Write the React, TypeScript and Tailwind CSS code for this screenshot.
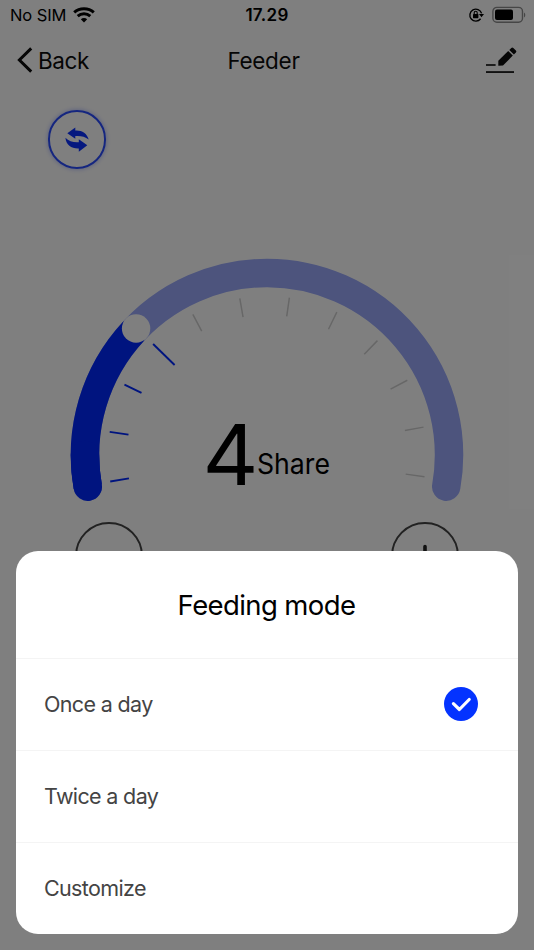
import React, { useState } from 'react';

const MODES = ['Once a day', 'Twice a day', 'Customize'];

const CENTER = { x: 267, y: 207 };
const RADIUS = 182;
const SHARE = 4;

// Angles are measured clockwise from the left side of the dial
const point = (deg: number, r: number) => {
  const rad = (deg * Math.PI) / 180;
  return { x: CENTER.x - r * Math.cos(rad), y: CENTER.y - r * Math.sin(rad) };
};

const arc = (from: number, to: number) => {
  const a = point(from, RADIUS);
  const b = point(to, RADIUS);
  return `M${a.x} ${a.y}A${RADIUS} ${RADIUS} 0 ${to - from > 180 ? 1 : 0} 1 ${b.x} ${b.y}`;
};

const StatusBar: React.FC = () => (
  <div className="flex h-[30px] items-center justify-between pl-[10px] pr-[8px] text-black">
    <div className="flex w-[120px] items-center gap-[7px]">
      <span className="text-[16.5px] leading-[30px] tracking-[-0.1px]">No SIM</span>
      <svg width="22" height="16" viewBox="0 0 22 16" fill="none" stroke="currentColor" strokeWidth="3">
        <path d="M1.2 5.4C6.6 .5 15.4 .5 20.8 5.4" />
        <path d="M4.7 9.2C8.3 6 13.7 6 17.3 9.2" />
        <path d="M11 15.4L7.8 12.2C9.6 10.7 12.4 10.7 14.2 12.2Z" fill="currentColor" stroke="none" />
      </svg>
    </div>
    <span className="-ml-[2px] pt-[2px] text-[17px] font-semibold tracking-[0.3px]">17.29</span>
    <div className="flex w-[120px] items-center justify-end gap-[8px]">
      <svg width="16" height="16" viewBox="0 0 16 16" fill="none" stroke="currentColor">
        <path d="M12.6 11.8A6 6 0 1 1 13.6 6.4" strokeWidth="1.4" />
        <path d="M11 7h5l-2.5 3.2z" fill="currentColor" stroke="none" />
        <rect x="5" y="7" width="5.4" height="4.2" rx=".6" fill="currentColor" stroke="none" />
        <path d="M6.2 7V5.8a1.5 1.5 0 0 1 3 0V7" strokeWidth="1.1" />
      </svg>
      <svg className="-mt-[1px]" width="34" height="18" viewBox="0 0 34 18">
        <rect x=".9" y="1.4" width="29.6" height="14.8" rx="4" fill="none" stroke="#8c8c8c" strokeWidth="1.4" />
        <rect x="3" y="3.6" width="18" height="10.4" rx="2" fill="currentColor" />
        <path d="M32 6.4c1.7.7 1.7 4.3 0 5z" fill="#8c8c8c" />
      </svg>
    </div>
  </div>
);

const NavBar: React.FC = () => (
  <div className="flex h-[60px] items-center justify-between pl-[17px] pr-[16px] text-[#0c0c0c]">
    <button className="flex w-[120px] items-center gap-[5px]">
      <svg width="16" height="26" viewBox="0 0 16 26" fill="none" stroke="currentColor" strokeWidth="3">
        <path d="M14.2 1.4L2.4 13l11.8 11.6" />
      </svg>
      <span className="pt-px text-[22.5px] tracking-[-0.4px]">Back</span>
    </button>
    <h1 className="-ml-[8px] pt-px text-[22.5px] tracking-[-0.3px]">Feeder</h1>
    <div className="flex w-[120px] justify-end">
      <svg width="34" height="30" viewBox="0 0 34 30" fill="currentColor">
        <path d="M14.3 20.8v-5L24.2 6l4.6 4.6-9.8 9.8z" />
        <path d="M25.3 4.9l2-2q1-1 2 0l2.6 2.6q1 1 0 2l-2 2z" />
        <rect x="2" y="19.2" width="9.6" height="1.6" />
        <rect x="2" y="26.2" width="28" height="1.7" />
      </svg>
    </div>
  </div>
);

const Gauge: React.FC = () => {
  const knob = point(44, RADIUS);
  return (
    <svg width="534" height="264" viewBox="0 0 534 264" fill="none">
      <path d={arc(-10, 190)} stroke="#9aa9fa" strokeWidth="28.5" strokeLinecap="round" />
      <path d={arc(-10, 43)} stroke="#0028ff" strokeWidth="28.5" />
      <path d={arc(-10, 0)} stroke="#0028ff" strokeWidth="28.5" strokeLinecap="round" />
      <circle cx={knob.x} cy={knob.y} r="14.2" fill="white" />
      {Array.from({ length: 12 }, (_, i) => {
        const deg = -9.6 + i * 17.95;
        const outer = point(deg, 159);
        const inner = point(deg, i === SHARE - 1 ? 129 : 140);
        return (
          <line
            key={i}
            x1={outer.x}
            y1={outer.y}
            x2={inner.x}
            y2={inner.y}
            stroke={i < SHARE ? '#0028ff' : '#cfcfcf'}
            strokeWidth={i < SHARE ? 1.9 : 1.5}
          />
        );
      })}
      <text x="202.5" y="237" fill="black" fontSize="84" textLength="56" lengthAdjust="spacingAndGlyphs">{SHARE}</text>
      <text x="257" y="225.5" fill="black" fontSize="28" textLength="73" lengthAdjust="spacingAndGlyphs">Share</text>
    </svg>
  );
};

const App: React.FC = () => {
  const [mode, setMode] = useState(MODES[0]);

  return (
    <div className="relative h-[950px] w-full overflow-hidden bg-white font-['Inter','Liberation_Sans',sans-serif]">
      <StatusBar />
      <NavBar />

      <div className="pl-[48px] pt-[20px]">
        <button className="flex h-[59px] w-[58px] items-center justify-center rounded-full border-2 border-[#2a4cff] text-[#0a30ff] shadow-[0_0_5px_rgba(0,40,255,0.35)]">
          <svg width="24" height="24" viewBox="0 0 24 24" fill="currentColor" overflow="visible">
            <path d="M2.3 5.3L10.3 -.4V2.5C16.5 2 22 5 23.7 11.6C20 8.6 15.8 7.6 10.3 8V10.8Z" />
            <path d="M22.3 17.3L13.8 23.7V20.5C6.5 20.8 1.2 17.3 .4 9.8C3.8 13.4 8.5 14.7 13.8 14.3V11.2Z" />
          </svg>
        </button>
      </div>

      <div className="mt-[79px]">
        <Gauge />
      </div>

      <div className="mt-[10px] flex justify-between px-[75px]">
        <button className="flex h-[68px] w-[68px] items-center justify-center rounded-full border-2 border-[#444]">
          <svg width="24" height="24" viewBox="0 0 24 24" stroke="#222" strokeWidth="3.6" strokeLinecap="round">
            <path d="M2.5 12h19" />
          </svg>
        </button>
        <button className="flex h-[68px] w-[68px] items-center justify-center rounded-full border-2 border-[#444]">
          <svg width="24" height="24" viewBox="0 0 24 24" stroke="#222" strokeWidth="3.6" strokeLinecap="round">
            <path d="M2.5 12h19M12 2.5v19" />
          </svg>
        </button>
      </div>

      {/* Mode picker */}
      <div className="absolute inset-0 flex items-end bg-black/50 px-4 pb-4">
        <div className="w-full rounded-[22px] bg-white">
          <h2 className="flex h-[107px] items-center justify-center pt-[2px] text-[27.5px] text-black">
            <span className="-ml-px tracking-[-0.6px]">Feeding mode</span>
          </h2>
          {MODES.map((item) => (
            <button
              key={item}
              onClick={() => setMode(item)}
              className="flex h-[92px] w-full items-center justify-between border-t border-[#f4f4f4] pb-[2px] pl-[29px] pr-[40px] text-[21.5px] text-[#444]"
            >
              <span className="-ml-px pt-px tracking-[-0.65px]">{item}</span>
              {item === mode && (
                <svg width="34" height="34" viewBox="0 0 34 34" fill="none">
                  <circle cx="17" cy="17" r="17" fill="#0433ff" />
                  <path d="M9.4 16.7l6 5.8 9.8-10" stroke="white" strokeWidth="3.2" strokeLinecap="round" strokeLinejoin="round" />
                </svg>
              )}
            </button>
          ))}
        </div>
      </div>
    </div>
  );
};

export default App;
